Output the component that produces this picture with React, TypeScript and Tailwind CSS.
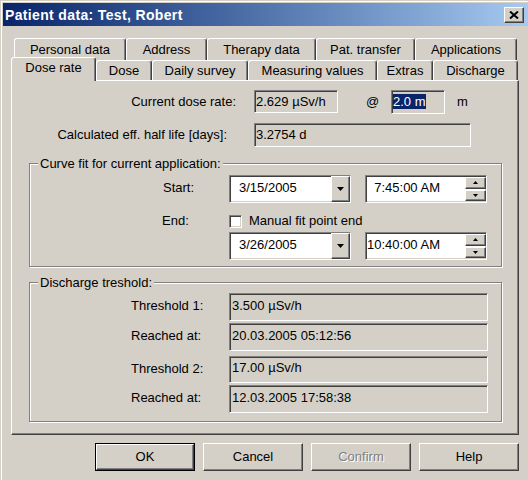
import type { ReactNode } from 'react'

const sunken =
  'border border-t-[#808080] border-l-[#808080] border-r-white border-b-white shadow-[inset_1px_1px_0_#404040,inset_-1px_-1px_0_#D4D0C8]'
const raised =
  'border border-t-white border-l-white border-r-[#404040] border-b-[#404040] shadow-[inset_-1px_-1px_0_#808080]'

function Tab({ label, className }: { label: string; className: string }) {
  return (
    <div
      className={`h-full pt-[3px] text-center leading-[15px] whitespace-nowrap border-l border-t border-white border-r border-r-[#404040] shadow-[inset_-1px_0_0_#808080] rounded-t-[3px] ${className}`}
    >
      {label}
    </div>
  )
}

function Arrow({ up = false, small = false }: { up?: boolean; small?: boolean }) {
  const w = small ? 5 : 7
  const h = small ? 3 : 4
  return (
    <svg width={w} height={h} viewBox={`0 0 ${w} ${h}`} className="block">
      <polygon
        points={up ? `0,${h} ${w},${h} ${w / 2},0` : `0,0 ${w},0 ${w / 2},${h}`}
        fill="#000"
      />
    </svg>
  )
}

function DateCombo({ value }: { value: string }) {
  return (
    <div className={`${sunken} bg-white w-[122px] h-full flex items-stretch`}>
      <div className="flex-1 pl-[9px] pb-[3px] flex items-center">{value}</div>
      <div className={`${raised} bg-[#D4D0C8] w-[19px] flex items-center justify-center`}>
        <Arrow />
      </div>
    </div>
  )
}

function TimeBox({ value }: { value: string }) {
  return (
    <div className={`${sunken} bg-white w-[122px] h-full ml-[14px] flex items-stretch`}>
      <div className="pl-[1px] pb-[3px] flex items-center">
        <div className="w-[73px] flex justify-end whitespace-nowrap">{value}</div>
      </div>
      <div className="flex-1" />
      <div className="w-[21px] flex flex-col gap-[1px] py-[1px]">
        <div className={`${raised} bg-[#D4D0C8] flex-1 flex items-center justify-center`}>
          <Arrow up small />
        </div>
        <div className={`${raised} bg-[#D4D0C8] flex-1 flex items-center justify-center`}>
          <Arrow small />
        </div>
      </div>
    </div>
  )
}

function Group({ title, className, children }: { title: string; className: string; children: ReactNode }) {
  return (
    <div
      className={`ml-[17px] w-[473px] border border-[#808080] shadow-[inset_1px_1px_0_#fff,1px_1px_0_#fff] ${className}`}
    >
      <div className="-mt-[8px] ml-[8px] px-[2px] w-fit bg-[#D4D0C8] leading-[15px]">{title}</div>
      {children}
    </div>
  )
}

function ReadRow({ label, value, className }: { label: string; value: string; className: string }) {
  return (
    <div className={`flex ${className}`}>
      <div className="w-[199px] pl-[101px] flex items-center pb-[2px]">{label}</div>
      <div className={`${sunken} w-[259px] pl-[2px] pb-[3px] flex items-center`}>{value}</div>
    </div>
  )
}

function Button({ label, primary = false, disabled = false }: { label: string; primary?: boolean; disabled?: boolean }) {
  const face = (
    <div
      className={`${raised} h-full flex items-center justify-center ${
        disabled ? 'text-[#808080] [text-shadow:1px_1px_0_#fff]' : ''
      }`}
    >
      {label}
    </div>
  )
  if (primary) {
    return <div className="w-[100px] h-[28px] border border-black">{face}</div>
  }
  return <div className="w-[100px] h-[28px]">{face}</div>
}

export default function App() {
  return (
    <div className="w-[528px] h-[480px] overflow-hidden bg-[#D4D0C8] border-t border-l border-[#D4D0C8] shadow-[inset_1px_1px_0_#fff] pt-[2px] pl-[2px] text-[13px] text-black font-['Liberation_Sans',Arial,sans-serif]">
      {/* title bar */}
      <div className="h-[23px] bg-linear-to-r from-[#0A246A] to-[#A6CAF0] flex items-center justify-between pl-[2px]">
        <span className="text-white font-bold text-[14px] tracking-[0.35px] leading-none">
          Patient data: Test, Robert
        </span>
        <div className={`${raised} bg-[#D4D0C8] w-[20px] h-[16px] mr-[4px] flex items-center justify-center`}>
          <svg width="10" height="8" viewBox="0 0 10 8" className="block">
            <path d="M1 0.5 L9 7.5 M9 0.5 L1 7.5" stroke="#000" strokeWidth="2" />
          </svg>
        </div>
      </div>

      <div className="pl-[8px] pt-[12px]">
        {/* back tab row */}
        <div className="flex ml-[3px] h-[22px]">
          <Tab label="Personal data" className="w-[112px]" />
          <Tab label="Address" className="w-[81px]" />
          <Tab label="Therapy data" className="w-[109px]" />
          <Tab label="Pat. transfer" className="w-[99px]" />
          <Tab label="Applications" className="w-[102px]" />
        </div>
        {/* front tab row */}
        <div className="flex h-[20px] items-end">
          <div className="relative z-10 w-[85px] h-[24px] -mb-[1px] pt-[2px] text-center leading-[15px] bg-[#D4D0C8] border-l border-t border-white border-r border-r-[#404040] shadow-[inset_-1px_0_0_#808080] rounded-t-[3px]">
            Dose rate
          </div>
          <Tab label="Dose" className="w-[56px] !pt-[2px]" />
          <Tab label="Daily survey" className="w-[96px] !pt-[2px]" />
          <Tab label="Measuring values" className="w-[129px] !pt-[2px]" />
          <Tab label="Extras" className="w-[56px] !pt-[2px]" />
          <Tab label="Discharge" className="w-[85px] !pt-[2px]" />
        </div>

        {/* tab panel */}
        <div className="w-[508px] border-l border-t border-white border-r border-b border-r-[#404040] border-b-[#404040] shadow-[inset_-1px_-1px_0_#808080] pt-[8px] pb-[12px]">
          <div className="flex items-center h-[25px]">
            <div className="w-[224px] text-right">Current dose rate:</div>
            <div className={`${sunken} ml-[18px] w-[84px] h-[23px] pl-[1px] flex items-center`}>2.629 µSv/h</div>
            <div className="ml-[28px] w-[13px]">@</div>
            <div className={`${sunken} ml-[12px] w-[54px] h-[24px] pl-[1px] flex items-center`}>
              <span className="bg-[#0A246A] text-white leading-[15px]">2.0 m</span>
            </div>
            <div className="ml-[12px]">m</div>
          </div>
          <div className="flex items-center h-[24px] mt-[9px]">
            <div className="w-[215px] text-right">Calculated eff. half life [days]:</div>
            <div className={`${sunken} ml-[27px] w-[217px] h-[24px] pl-[1px] flex items-center`}>3.2754 d</div>
          </div>

          <Group title="Curve fit for current application:" className="mt-[16px] pb-[6px]">
            <div className="flex h-[28px] mt-[4px]">
              <div className="w-[199px] pl-[133px] flex items-center pb-[3px]">Start:</div>
              <DateCombo value="3/15/2005" />
              <TimeBox value="7:45:00 AM" />
            </div>
            <div className="flex items-center h-[16px] mt-[10px]">
              <div className="w-[199px] pl-[132px]">End:</div>
              <div className={`${sunken} bg-white w-[13px] h-[13px]`} />
              <div className="ml-[7px]">Manual fit point end</div>
            </div>
            <div className="flex h-[28px] mt-[3px]">
              <div className="w-[199px]" />
              <DateCombo value="3/26/2005" />
              <TimeBox value="10:40:00 AM" />
            </div>
          </Group>

          <Group title="Discharge treshold:" className="mt-[15px] pb-[8px]">
            <ReadRow label="Threshold 1:" value="3.500 µSv/h" className="h-[28px] mt-[3px]" />
            <ReadRow label="Reached at:" value="20.03.2005 05:12:56" className="h-[28px] mt-[2px]" />
            <ReadRow label="Threshold 2:" value="17.00 µSv/h" className="h-[27px] mt-[5px]" />
            <ReadRow label="Reached at:" value="12.03.2005 17:58:38" className="h-[28px] mt-[2px]" />
          </Group>
        </div>

        {/* buttons */}
        <div className="flex gap-[8px] ml-[84px] mt-[8px]">
          <Button label="OK" primary />
          <Button label="Cancel" />
          <Button label="Confirm" disabled />
          <Button label="Help" />
        </div>
      </div>
    </div>
  )
}
